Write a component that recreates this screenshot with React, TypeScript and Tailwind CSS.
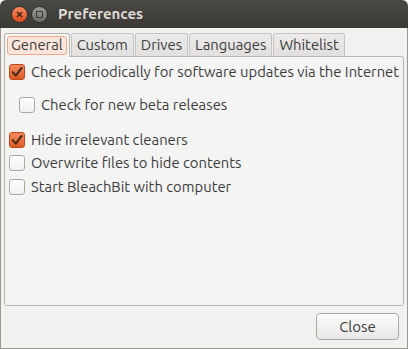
import type { ReactNode } from "react";

const tabs = ["General", "Custom", "Drives", "Languages", "Whitelist"];

function Check({ checked }: { checked?: boolean }) {
  if (checked) {
    return (
      <span className="flex h-[16px] w-[16px] shrink-0 items-center justify-center rounded-[3px] border border-[#c2461b] bg-gradient-to-b from-[#f58a5a] to-[#e15a25]">
        <svg width="12" height="12" viewBox="0 0 12 12" aria-hidden>
          <path d="M1.8 6.2 L4.8 9.6 L10.6 2" fill="none" stroke="#4a2a1c" strokeWidth="2.1" strokeLinecap="round" strokeLinejoin="round" />
        </svg>
      </span>
    );
  }
  return (
    <span className="h-[16px] w-[16px] shrink-0 rounded-[3px] border border-[#a9a8a5] bg-gradient-to-b from-white to-[#f1f0ef]" />
  );
}

function Row({ checked, className, children }: { checked?: boolean; className?: string; children: ReactNode }) {
  return (
    <div className={`flex items-center gap-[6px] whitespace-nowrap ${className ?? ""}`}>
      <Check checked={checked} />
      <span>{children}</span>
    </div>
  );
}

export default function App() {
  return (
    <div
      className="flex h-[349px] w-[408px] flex-col overflow-hidden bg-[#f2f1f0] text-[14.8px] leading-[18px] text-[#3c3c3c]"
      style={{ fontFamily: "Ubuntu, 'Noto Sans', 'DejaVu Sans', sans-serif" }}
    >
      {/* title bar */}
      <div className="flex h-[28px] shrink-0 items-center rounded-t-[6px] bg-gradient-to-b from-[#4a4944] to-[#3a3935] pl-[11px]">
        <span className="flex h-[17px] w-[17px] items-center justify-center rounded-full border border-[#2f2e2b] bg-gradient-to-b from-[#f68a5c] to-[#de4b17]">
          <svg width="7" height="7" viewBox="0 0 7 7" aria-hidden>
            <path d="M1 1 L6 6 M6 1 L1 6" stroke="#3a2418" strokeWidth="1.6" />
          </svg>
        </span>
        <span className="ml-[3px] flex h-[17px] w-[17px] items-center justify-center rounded-full border border-[#2f2e2b] bg-gradient-to-b from-[#9b9a95] to-[#6c6b66]">
          <span className="h-[7px] w-[7px] border-[1.5px] border-[#3c3b37]" />
        </span>
        <span className="ml-[10px] font-bold text-[15px] text-[#dfdbd2]">Preferences</span>
      </div>

      {/* body */}
      <div className="flex flex-1 flex-col border-x border-b border-[#9a9996] px-[3px] pb-[8px] pt-[5px]">
        <div className="flex h-[23px] items-end whitespace-nowrap">
          {tabs.map((t, i) =>
            i === 0 ? (
              <div key={t} className="relative z-10 -mb-px flex h-[24px] items-center rounded-t-[3px] border border-b-0 border-[#b6b5b2] bg-[#f4f4f3] px-[2px]">
                <span className="flex h-[19px] items-center rounded-[3px] border border-[#f0a98a] bg-[#fbe4da] px-[3px] leading-none">
                  {t}
                </span>
              </div>
            ) : (
              <div
                key={t}
                className="ml-px flex h-[23px] items-center rounded-t-[3px] border border-b-0 border-[#c4c3c0] bg-gradient-to-b from-[#ecebe9] to-[#e1e0de] px-[5px] leading-none"
              >
                {t}
              </div>
            )
          )}
        </div>
        <div className="flex flex-1 flex-col rounded-[3px] rounded-tl-none border border-[#b6b5b2] bg-[#f4f4f3] pl-[4px] pt-[6px]">
          <Row checked className="h-[17px]">Check periodically for software updates via the Internet</Row>
          <Row className="ml-[10px] mt-[16px] h-[17px]">Check for new beta releases</Row>
          <Row checked className="mt-[18px] h-[17px]">Hide irrelevant cleaners</Row>
          <Row className="mt-[6px] h-[17px]">Overwrite files to hide contents</Row>
          <Row className="mt-[7px] h-[17px]">Start BleachBit with computer</Row>
        </div>
        <div className="mt-[7px] flex justify-end pr-[5px]">
          <button
            type="button"
            className="flex h-[27px] w-[83px] items-center justify-center rounded-[4px] border border-[#a9a8a5] bg-gradient-to-b from-[#fbfbfb] to-[#e9e8e6] text-[15px] text-[#3c3c3c]"
          >
            Close
          </button>
        </div>
      </div>
    </div>
  );
}
